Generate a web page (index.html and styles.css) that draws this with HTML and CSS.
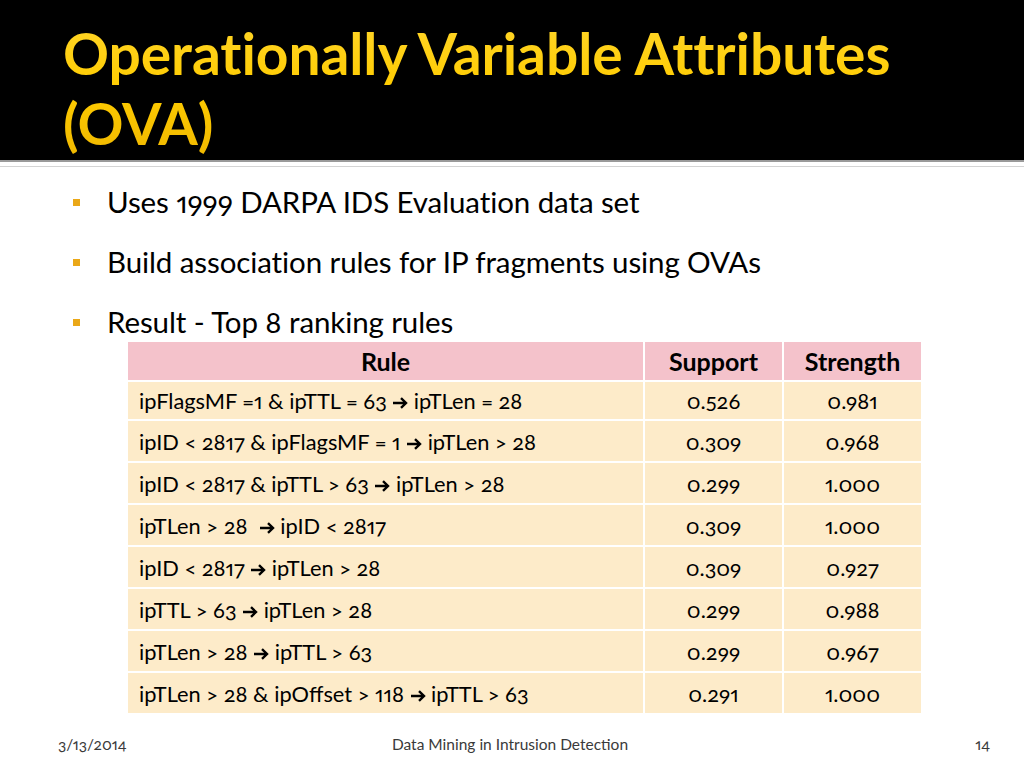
FILE: index.html
```html
<!DOCTYPE html>
<html lang="en">
<head>
<meta charset="utf-8">
<title>Operationally Variable Attributes (OVA)</title>
<link rel="stylesheet" href="styles.css">
</head>
<body>
<div class="slide">
  <header class="title-bar">
    <h1 class="title">Operationally Variable Attributes<br>(OVA)</h1>
  </header>
  <div class="divider"></div>
  <main class="content">
    <ul class="bullets">
      <li>Uses 1999 DARPA IDS Evaluation data set</li>
      <li>Build association rules for IP fragments using OVAs</li>
      <li>Result - Top 8 ranking rules</li>
    </ul>
    <table class="rules">
      <thead>
        <tr><th class="c-rule">Rule</th><th class="c-num">Support</th><th class="c-num last">Strength</th></tr>
      </thead>
      <tbody>
        <tr class="first"><td class="c-rule">ipFlagsMF =1 &amp; ipTTL = 63 <svg class="arr" viewBox="0 0 16 14" aria-label="→"><path d="M1 7H14M9 2.2L14 7L9 11.8"/></svg> ipTLen = 28</td><td class="c-num">0.526</td><td class="c-num last">0.981</td></tr>
        <tr><td class="c-rule">ipID &lt; 2817 &amp; ipFlagsMF = 1 <svg class="arr" viewBox="0 0 16 14" aria-label="→"><path d="M1 7H14M9 2.2L14 7L9 11.8"/></svg> ipTLen &gt; 28</td><td class="c-num">0.309</td><td class="c-num last">0.968</td></tr>
        <tr><td class="c-rule">ipID &lt; 2817 &amp; ipTTL &gt; 63 <svg class="arr" viewBox="0 0 16 14" aria-label="→"><path d="M1 7H14M9 2.2L14 7L9 11.8"/></svg> ipTLen &gt; 28</td><td class="c-num">0.299</td><td class="c-num last">1.000</td></tr>
        <tr><td class="c-rule">ipTLen &gt; 28&nbsp; <svg class="arr" viewBox="0 0 16 14" aria-label="→"><path d="M1 7H14M9 2.2L14 7L9 11.8"/></svg> ipID &lt; 2817</td><td class="c-num">0.309</td><td class="c-num last">1.000</td></tr>
        <tr><td class="c-rule">ipID &lt; 2817 <svg class="arr" viewBox="0 0 16 14" aria-label="→"><path d="M1 7H14M9 2.2L14 7L9 11.8"/></svg> ipTLen &gt; 28</td><td class="c-num">0.309</td><td class="c-num last">0.927</td></tr>
        <tr><td class="c-rule">ipTTL &gt; 63 <svg class="arr" viewBox="0 0 16 14" aria-label="→"><path d="M1 7H14M9 2.2L14 7L9 11.8"/></svg> ipTLen &gt; 28</td><td class="c-num">0.299</td><td class="c-num last">0.988</td></tr>
        <tr><td class="c-rule">ipTLen &gt; 28 <svg class="arr" viewBox="0 0 16 14" aria-label="→"><path d="M1 7H14M9 2.2L14 7L9 11.8"/></svg> ipTTL &gt; 63</td><td class="c-num">0.299</td><td class="c-num last">0.967</td></tr>
        <tr class="final"><td class="c-rule">ipTLen &gt; 28 &amp; ipOffset &gt; 118 <svg class="arr" viewBox="0 0 16 14" aria-label="→"><path d="M1 7H14M9 2.2L14 7L9 11.8"/></svg> ipTTL &gt; 63</td><td class="c-num">0.291</td><td class="c-num last">1.000</td></tr>
      </tbody>
    </table>
  </main>
  <footer class="footer">
    <span class="f-date">3/13/2014</span>
    <span class="f-center">Data Mining in Intrusion Detection</span>
    <span class="f-num">14</span>
  </footer>
</div>
</body>
</html>
```
FILE: styles.css
```css
* { box-sizing: border-box; }
html, body { margin: 0; padding: 0; background: #fff; }
body {
  font-family: "Lato", "Open Sans", sans-serif;
  font-variant-numeric: oldstyle-nums proportional-nums;
  color: #000;
}
.slide {
  width: 1024px;
  height: 768px;
  display: flex;
  flex-direction: column;
  overflow: hidden;
}
.title-bar {
  background: #000;
  height: 160px;
  padding: 18px 0 0 63px;
  flex: none;
}
.title {
  margin: 0;
  font-family: "Lato", sans-serif;
  font-weight: 700;
  font-size: 57px;
  line-height: 70px;
  letter-spacing: -0.1px;
  color: #ffcc00;
  background: linear-gradient(180deg, #ffd52a 0%, #ffcc00 50%, #f0b800 100%);
  -webkit-background-clip: text;
  background-clip: text;
  -webkit-text-fill-color: transparent;
}
.divider {
  flex: none;
  height: 7px;
  border-top: 2px solid #9a9a9a;
  border-bottom: 1px solid #d4d4d4;
}
.content {
  flex: none;
  padding: 18px 0 0 0;
}
.bullets {
  list-style: none;
  margin: 0;
  padding: 0 0 0 107px;
  display: flex;
  flex-direction: column;
  gap: 26px;
}
.bullets li {
  position: relative;
  font-size: 29.5px;
  line-height: 34px;
  letter-spacing: -0.1px;
}
.bullets li::before {
  content: "";
  position: absolute;
  left: -34px;
  top: 14px;
  width: 7px;
  height: 7px;
  background: #eaa818;
}
.rules {
  margin: 3px 0 0 128px;
  width: 793px;
  border-collapse: separate;
  border-spacing: 0;
  font-size: 21.8px;
}
.rules th, .rules td {
  border-right: 2px solid #fff;
  border-bottom: 2px solid #fff;
  padding: 0;
}
.rules .last { border-right: none; }
.rules th {
  background: #f4c2cb;
  font-weight: 700;
  font-size: 25px;
  text-align: center;
  height: 40px;
}
.rules td { background: #fdebc9; height: 42px; }
.rules tr.first td { height: 39px; }
.rules tr.final td { height: 40px; border-bottom: none; }
.rules .c-rule { width: 517px; text-align: left; padding-left: 11px; }
.rules th.c-rule { text-align: center; padding-left: 0; }
.rules .c-num { width: 139px; text-align: center; }
.rules .c-num.last { width: 137px; }
.arr {
  width: 16px;
  height: 14px;
  vertical-align: -1px;
  fill: none;
  stroke: #000;
  stroke-width: 2.4;
  stroke-linecap: butt;
  stroke-linejoin: miter;
}
.footer {
  flex: none;
  margin-top: 21px;
  display: grid;
  grid-template-columns: 1fr auto 1fr;
  align-items: center;
  padding: 0 34px 0 30px;
  font-size: 15.5px;
  line-height: 20px;
  color: #3a3a3a;
}
.f-date { padding-left: 28px; }
.f-center { text-align: center; }
.f-num { text-align: right; }
```
